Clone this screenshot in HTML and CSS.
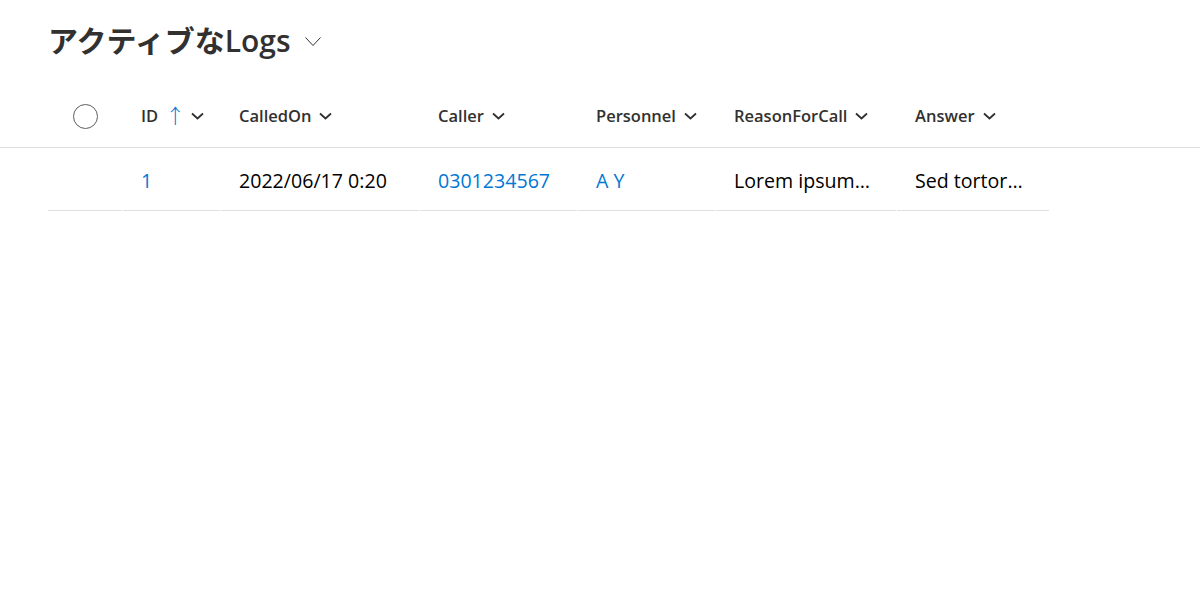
FILE: index.html
```html
<!DOCTYPE html>
<html lang="ja">
<head>
<meta charset="utf-8">
<title>アクティブなLogs</title>
<link rel="stylesheet" href="styles.css">
</head>
<body>
<div class="page">
  <div class="view-title">
    <h1 class="title">アクティブな<span class="title-latin">Logs</span></h1>
    <svg class="title-chevron" width="16" height="10" viewBox="0 0 16 10"><path d="M0.5 0.5 L8 8.5 L15.5 0.5" fill="none" stroke="#323130" stroke-width="1"/></svg>
  </div>
  <div class="list">
    <div class="header-row">
      <div class="cell check-cell"><span class="check-circle"></span></div>
      <div class="cell col-id hcell"><span>ID</span><span class="sort-arrow">↑</span><svg class="chev" width="13" height="8" viewBox="0 0 13 8"><path d="M1 1.5 L6.5 6.5 L12 1.5" fill="none" stroke="#323130" stroke-width="1.8"/></svg></div>
      <div class="cell col-date hcell"><span>CalledOn</span><svg class="chev" width="13" height="8" viewBox="0 0 13 8"><path d="M1 1.5 L6.5 6.5 L12 1.5" fill="none" stroke="#323130" stroke-width="1.8"/></svg></div>
      <div class="cell col-caller hcell"><span>Caller</span><svg class="chev" width="13" height="8" viewBox="0 0 13 8"><path d="M1 1.5 L6.5 6.5 L12 1.5" fill="none" stroke="#323130" stroke-width="1.8"/></svg></div>
      <div class="cell col-person hcell"><span>Personnel</span><svg class="chev" width="13" height="8" viewBox="0 0 13 8"><path d="M1 1.5 L6.5 6.5 L12 1.5" fill="none" stroke="#323130" stroke-width="1.8"/></svg></div>
      <div class="cell col-reason hcell"><span>ReasonForCall</span><svg class="chev" width="13" height="8" viewBox="0 0 13 8"><path d="M1 1.5 L6.5 6.5 L12 1.5" fill="none" stroke="#323130" stroke-width="1.8"/></svg></div>
      <div class="cell col-answer hcell"><span>Answer</span><svg class="chev" width="13" height="8" viewBox="0 0 13 8"><path d="M1 1.5 L6.5 6.5 L12 1.5" fill="none" stroke="#323130" stroke-width="1.8"/></svg></div>
    </div>
    <div class="data-row">
      <div class="cell check-cell dcell"></div>
      <div class="cell col-id dcell link">1</div>
      <div class="cell col-date dcell">2022/06/17 0:20</div>
      <div class="cell col-caller dcell link">0301234567</div>
      <div class="cell col-person dcell link">A Y</div>
      <div class="cell col-reason dcell">Lorem ipsum…</div>
      <div class="cell col-answer dcell">Sed tortor…</div>
    </div>
  </div>
</div>
</body>
</html>
```
FILE: styles.css
```css
html, body {
  margin: 0;
  padding: 0;
  background: #ffffff;
}
body {
  font-family: "Open Sans", "Noto Sans CJK JP", sans-serif;
  color: #201f1e;
}
.page {
  width: 1200px;
}
.view-title {
  display: flex;
  align-items: center;
  gap: 14px;
  padding: 20px 48px 0 48px;
  height: 40px;
}
.title {
  margin: 0;
  font-family: "Noto Sans CJK JP", "Open Sans", sans-serif;
  font-size: 30px;
  font-weight: 700;
  color: #323130;
  line-height: 40px;
}
.title-latin {
  font-family: "Open Sans", sans-serif;
  font-weight: 600;
  font-size: 30px;
}
.title-chevron {
  margin-top: 4px;
}
.list {
  margin-top: 25px;
}
.header-row {
  display: flex;
  gap: 1px;
  padding-left: 48px;
  height: 62px;
  border-bottom: 1px solid #e1dfdd;
}
.data-row {
  display: flex;
  gap: 1px;
  padding-left: 48px;
  height: 63px;
}
.cell {
  display: flex;
  align-items: center;
  box-sizing: border-box;
  padding-left: 18px;
  white-space: nowrap;
}
.check-cell { width: 74px; justify-content: center; padding-left: 0; }
.col-id { width: 97px; }
.col-date { width: 198px; }
.col-caller { width: 157px; }
.col-person { width: 137px; }
.col-reason { width: 180px; }
.col-answer { width: 152px; }
.check-circle {
  display: block;
  width: 23px;
  height: 23px;
  border: 1.5px solid #605e5c;
  border-radius: 50%;
}
.hcell {
  font-size: 16.5px;
  font-weight: 600;
  color: #323130;
  gap: 8px;
  padding-bottom: 2px;
}
.sort-arrow {
  font-weight: 300;
  color: #0078d4;
  font-size: 20px;
  line-height: 1;
  margin: 3px -2px 0 -1px;
}
.chev {
  display: block;
  margin-top: 1px;
}
.dcell {
  font-size: 19.6px;
  color: #000000;
  border-bottom: 1px solid #e1dfdd;
  padding-top: 2px;
}
.link {
  color: #0078d4;
}
```
